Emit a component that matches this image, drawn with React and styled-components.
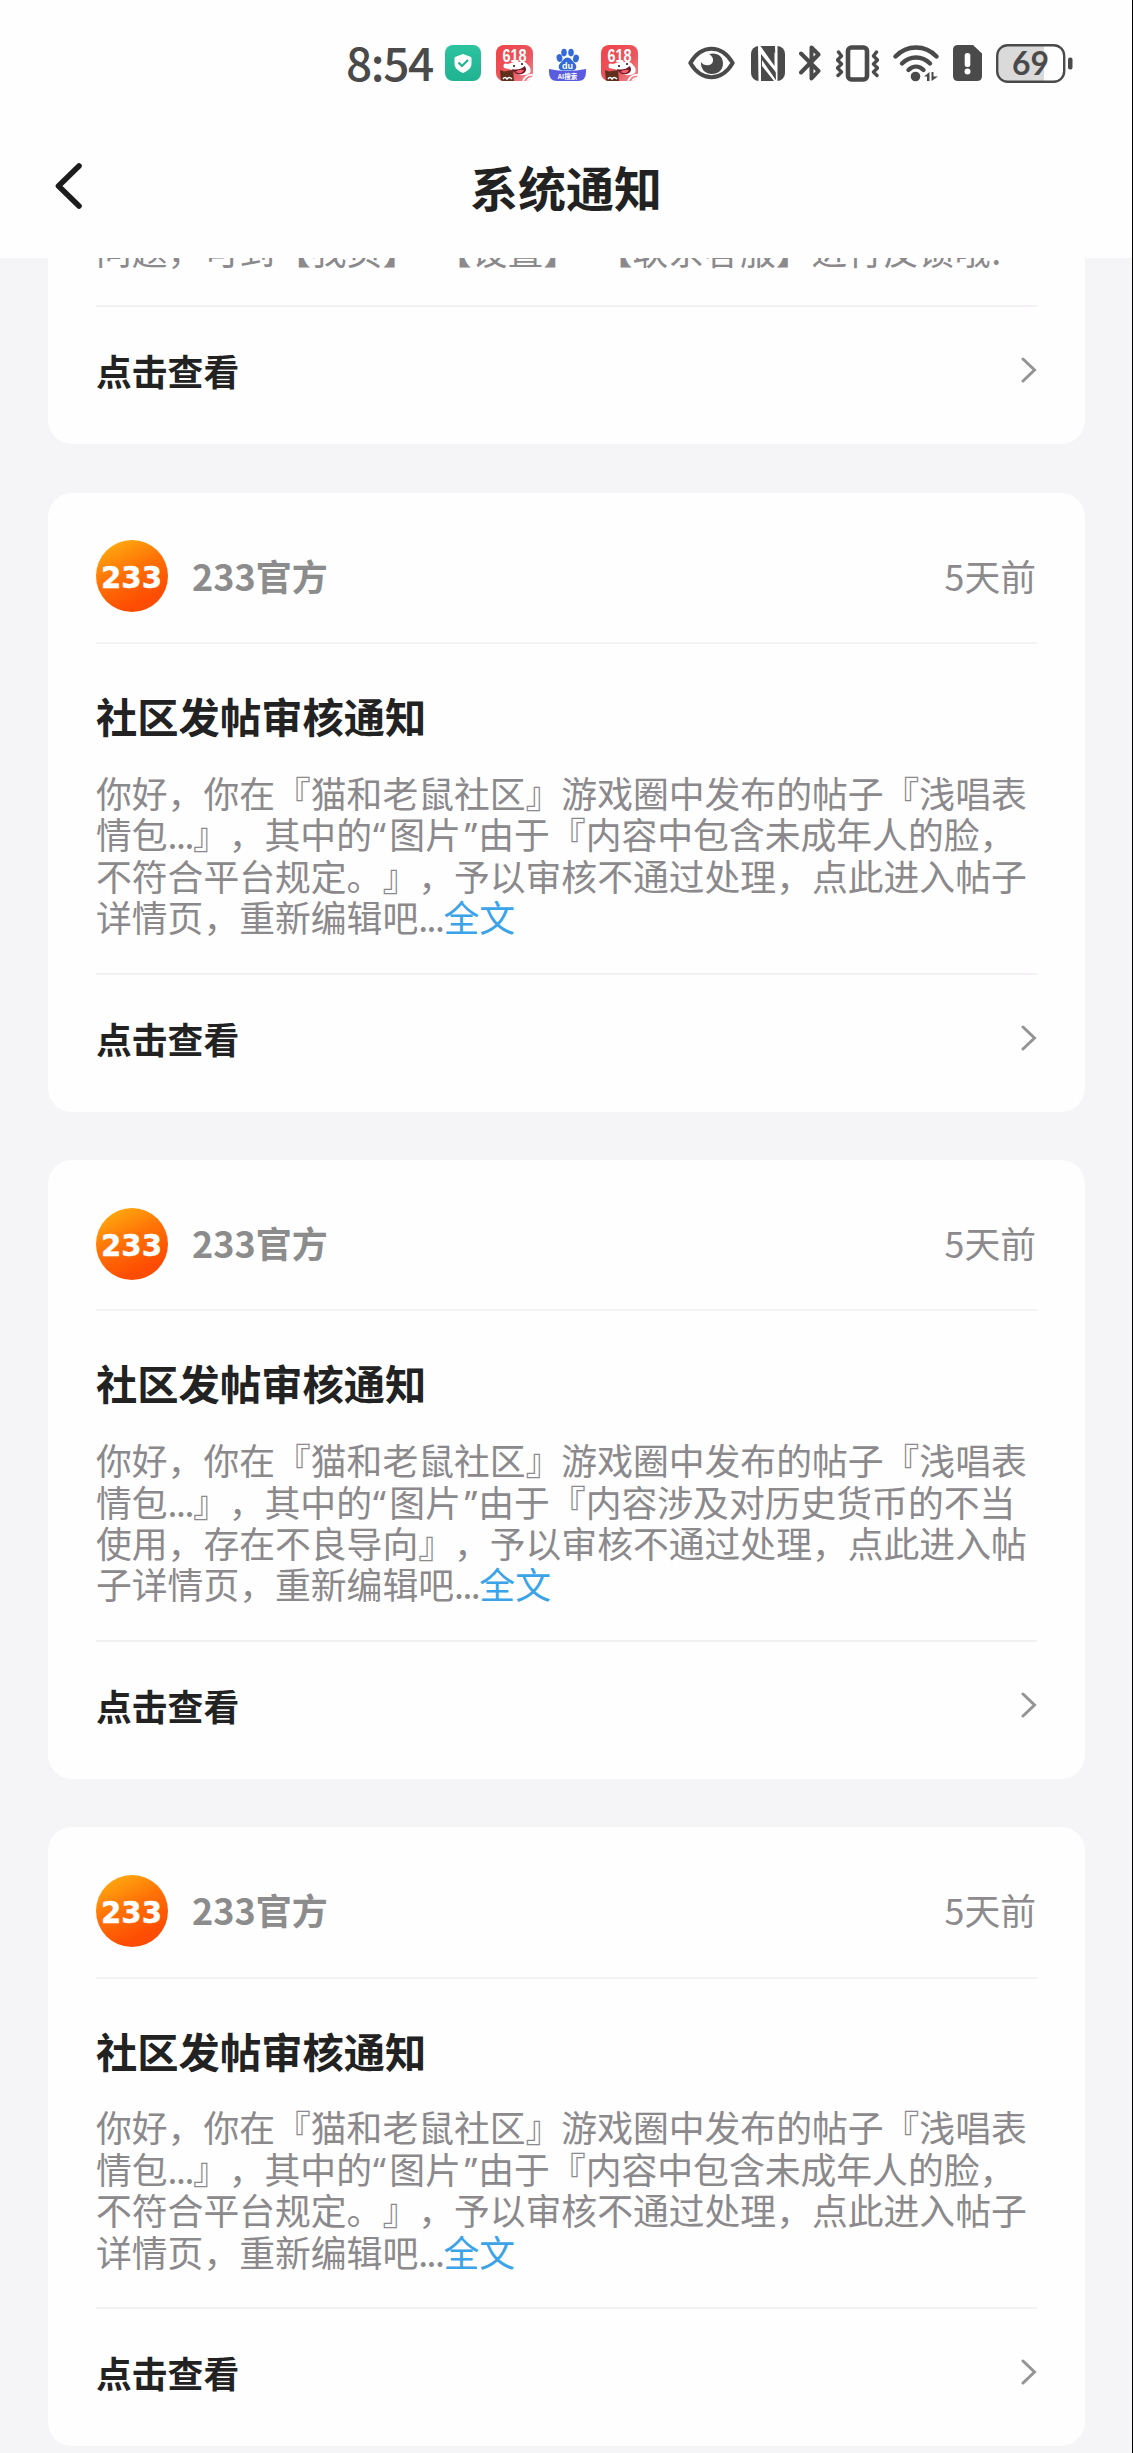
import React from "react";
import styled, { createGlobalStyle } from "styled-components";

const GlobalStyle = createGlobalStyle`
  * {
    box-sizing: border-box;
  }
  body {
    margin: 0;
    background: #f5f4f6;
    font-family: "Noto Sans CJK SC", sans-serif;
    text-spacing-trim: space-all;
    overflow: hidden;
  }
  h1, h2, p {
    margin: 0;
  }
`;

const Screen = styled.div`
  display: flex;
  flex-direction: column;
  width: 1133px;
  height: 2453px;
  overflow: hidden;
  background: #f5f4f6;
  border-right: 1px solid #000;
`;

const StatusBar = styled.div`
  flex: none;
  display: flex;
  height: 126px;
  padding: 0 59px 0 346px;
  align-items: center;
  justify-content: space-between;
  background: #fefefe;
  color: #4a4a4a;
`;

const StatusGroup = styled.div`
  display: flex;
  align-items: center;
  gap: ${({ $gap }) => $gap}px;

  svg {
    display: block;
    flex: none;
  }
`;

const Clock = styled.span`
  width: 83px;
  padding-bottom: 5px;
  font-size: 46px;
  font-weight: 500;
  line-height: 50px;
  letter-spacing: -1.4px;
  white-space: nowrap;
`;

const NavBar = styled.header`
  flex: none;
  display: grid;
  grid-template-columns: 96px 1fr 96px;
  align-items: center;
  height: 132px;
  padding-bottom: 12px;
  background: #fefefe;
`;

const BackButton = styled.button`
  display: flex;
  justify-content: flex-end;
  padding: 0 12.5px 0 0;
  border: 0;
  background: none;
`;

const NavTitle = styled.h1`
  padding-bottom: 1px;
  color: #222;
  font-size: 48px;
  font-weight: 700;
  line-height: 60px;
  text-align: center;
`;

const Feed = styled.main`
  flex: 1;
  min-height: 0;
  display: flex;
  flex-direction: column;
  justify-content: flex-end;
  gap: 48.2px;
  padding: 0 47px 7px 48px;
  overflow: hidden;
`;

const Card = styled.article`
  flex: none;
  display: flex;
  flex-direction: column;
  height: 619px;
  padding: 0 48px;
  border-radius: 24px;
  background: #fefefe;
`;

const Sender = styled.div`
  display: flex;
  align-items: center;
  height: 151.5px;
  padding-top: 18px;
  border-bottom: 2px solid #f3f2f4;

  svg {
    display: block;
    margin-right: 24px;
  }
`;

const SenderName = styled.span`
  flex: 1;
  padding-bottom: 3px;
  color: #8c8c8c;
  font-size: 36px;
  font-weight: 700;
`;

const Time = styled.time`
  padding: 0 1px 3px 0;
  color: #8c8a8d;
  font-size: 35.8px;
`;

const Content = styled.div`
  flex: 1;
  display: flex;
  flex-direction: column;
  padding-top: 41px;
`;

const Title = styled.h2`
  color: #222;
  font-size: 41.3px;
  font-weight: 700;
  line-height: 60px;
`;

const Message = styled.p`
  margin-top: auto;
  padding-bottom: 35px;
  color: #8b898c;
  font-size: 35.8px;
  line-height: 41.4px;
  white-space: nowrap;
`;

const Line = styled.span`
  display: block;
`;

const Dots = styled.span`
  letter-spacing: -1.5px;
`;

const Dash = styled.span`
  letter-spacing: -1.5px;
`;

const Quote = styled.span`
  display: inline-block;
  width: 17.4px;
  padding: 0 1px;
  font-family: "Noto Sans", sans-serif;
  line-height: 1;
  text-align: ${({ $side }) => $side};
`;

const FullTextLink = styled.a`
  color: #3ba3e8;
`;

const ViewRow = styled.div`
  flex: none;
  display: flex;
  align-items: center;
  justify-content: space-between;
  height: 139px;
  padding-bottom: 11px;
  border-top: 2px solid #f2f0f3;
  color: #222;
  font-size: 35.8px;
  font-weight: 700;
`;

function ShieldAppIcon() {
  return (
    <svg width="36" height="36" viewBox="0 0 36 36">
      <defs>
        <linearGradient id="shield" x1="0" y1="0" x2="0" y2="1">
          <stop offset="0" stopColor="#2cc39f" />
          <stop offset="1" stopColor="#20b391" />
        </linearGradient>
      </defs>
      <rect width="36" height="36" rx="8" fill="url(#shield)" />
      <path d="M18 9.500 26 12.500v6.500c0 4-3.400 6.500-8 8.500-4.600-2-8-4.500-8-8.500v-6.500z" fill="#fff" stroke="#fff" strokeLinejoin="round" />
      <path d="m13.500 17.500 3.500 3.500 6-6" fill="none" stroke="#22b592" strokeWidth="2.200" />
    </svg>
  );
}

function SaleAppIcon() {
  return (
    <svg width="37" height="36" viewBox="0 0 37 36">
      <defs>
        <linearGradient id="sale" x1="0" y1="0" x2="1" y2="1">
          <stop offset="0" stopColor="#ee4447" />
          <stop offset="0.6" stopColor="#ec5660" />
          <stop offset="1" stopColor="#f08a94" />
        </linearGradient>
        <clipPath id="saleClip">
          <rect width="37" height="36" rx="8" />
        </clipPath>
      </defs>
      <g clipPath="url(#saleClip)">
        <rect width="37" height="36" fill="url(#sale)" />
        <path d="M8 23q-2-6 4-4 5-2 7-2 1-3 4 0 6-2 9 3 4 3 2 8-2 2-6 2-8 1-11-5z" fill="#fff" />
        <path d="M16 24q7 2 13-3 3 6-3 8-7 2-10-5z" fill="#6b1823" />
        <path d="M19 27q4-3 9-2-2 5-9 2z" fill="#f4616b" />
        <circle cx="18" cy="21" r="1.100" fill="#2c2020" />
        <circle cx="26" cy="19" r="1.100" fill="#2c2020" />
        <path d="m4 25 4 1.500 9-1.500 1 11H5z" fill="#5d2f1c" />
        <path d="M7 34q2-3 4 0 2-3 5 0" fill="none" stroke="#fff" strokeWidth="1.500" />
        <path d="M27 36q3-7 10-6M31 36q2-3 6-3" fill="none" stroke="#fff" strokeWidth="1.800" />
        <text x="18.500" y="17" textAnchor="middle" fill="#fff" fontFamily="Liberation Sans, sans-serif" fontSize="18" fontWeight="700" textLength="24" lengthAdjust="spacingAndGlyphs">
          618
        </text>
      </g>
    </svg>
  );
}

function PawAppIcon() {
  return (
    <svg width="37" height="36" viewBox="0 0 37 36">
      <path d="M0 24q18 4 37 0v3q0 9-8 9H8q-8 0-8-9z" fill="#5a5ce0" />
      <g fill="#3569d8">
        <ellipse cx="10.500" cy="13" rx="2.900" ry="3.900" transform="rotate(-12 10.500 13)" />
        <ellipse cx="15" cy="7.600" rx="2.800" ry="3.800" />
        <ellipse cx="22" cy="7.600" rx="2.800" ry="3.800" />
        <ellipse cx="27" cy="13.500" rx="2.900" ry="3.900" transform="rotate(12 27 13.500)" />
        <path d="M18.500 12.500c3.500 0 4.500 3.500 7 5.500 3.500 3 1.500 7.500-2 7.500H13.500c-3.500 0-5.500-4.500-2-7.500 2.500-2 3.500-5.500 7-5.500z" />
      </g>
      <text x="18.500" y="23.500" textAnchor="middle" fill="#fff" fontFamily="Liberation Sans, sans-serif" fontSize="9" fontWeight="700">
        du
      </text>
      <text x="18.500" y="34" textAnchor="middle" fill="#fff" fontFamily="Noto Sans CJK SC, sans-serif" fontSize="6.500" fontWeight="700">
        AI搜索
      </text>
    </svg>
  );
}

function EyeIcon() {
  return (
    <svg width="49" height="34" viewBox="0 0 49 34">
      <path d="M2.300 17C8 7.500 15 2.800 23.500 2.800S39 7.500 44.700 17C39 26.500 32 31.200 23.500 31.200S8 26.500 2.300 17z" fill="none" stroke="#4a4a4a" strokeWidth="4" strokeLinejoin="round" />
      <path d="M21 8c8-2 14 2 14 9.500 0 6.500-5 10.500-11 10.500-7 0-11.500-5-11-12 2 4 11 5 12-1 .5-3-1.500-5.500-4-7z" fill="#4a4a4a" />
    </svg>
  );
}

function NfcIcon() {
  return (
    <svg width="34" height="35" viewBox="0 0 34 35">
      <rect width="34" height="35" rx="8" fill="#4a4a4a" />
      <path d="M7 0h2.500l14 20V6l2 3v18L10 8v27H7.500z" fill="#fefefe" />
      <path d="M11 14 25.500 35H23L11 20z" fill="#fefefe" />
      <path d="M24 0h2.500v35H25z" fill="#fefefe" />
    </svg>
  );
}

function BluetoothIcon() {
  return (
    <svg width="23" height="36" viewBox="0 0 23 36">
      <path d="M2 8.500 19.500 26 12.500 33.500V2.500L19.500 9.500 2 27.500" fill="none" stroke="#4a4a4a" strokeWidth="4" strokeLinecap="round" strokeLinejoin="round" />
    </svg>
  );
}

function VibrateIcon() {
  return (
    <svg width="43" height="37" viewBox="0.500 0 43 37">
      <rect x="12.500" y="2.500" width="19" height="32" rx="3.500" fill="none" stroke="#4a4a4a" strokeWidth="4.600" />
      <path d="m3 7 3 4-4 4 4 4-4 4 4 4-3.500 3.500M41 7l-3 4 4 4-4 4 4 4-4 4 3.500 3.500" fill="none" stroke="#4a4a4a" strokeWidth="3.400" strokeLinecap="round" strokeLinejoin="round" />
    </svg>
  );
}

function WifiIcon() {
  return (
    <svg width="46" height="37" viewBox="0 0 46 37">
      <g fill="none" stroke="#4a4a4a" strokeWidth="4.400" strokeLinecap="round">
        <path d="M2.500 11.500C14-.5 32-.5 43.500 11.500" />
        <path d="M9 18.500c8-8 20-8 28 0" />
        <path d="M15.500 25c4.500-4.500 10.500-4.500 15 0" />
      </g>
      <circle cx="22.500" cy="31.500" r="4.800" fill="#4a4a4a" />
      <path d="M36.500 27v9H34v-4.500h-3zM38.500 36v-9h2v4.500h4.500z" fill="#4a4a4a" />
    </svg>
  );
}

function SimAlertIcon() {
  return (
    <svg width="29" height="36" viewBox="0 0 29 36">
      <path d="M5 0h15l9 8.500V31q0 5-5 5H5q-5 0-5-5V5q0-5 5-5z" fill="#4a4a4a" />
      <rect x="11.700" y="8" width="5.600" height="14" rx="2.500" fill="#fefefe" />
      <circle cx="14.500" cy="26.500" r="3" fill="#fefefe" />
    </svg>
  );
}

function BatteryIcon() {
  return (
    <svg width="77" height="39" viewBox="0 0 77 39">
      <path d="M12 2h36v35H12Q2 37 2 27V12Q2 2 12 2z" fill="#dadada" />
      <rect x="1.200" y="1.200" width="67" height="36.600" rx="10.500" fill="none" stroke="#4a4a4a" strokeWidth="2.400" />
      <rect x="72" y="13.500" width="4.500" height="12" rx="2" fill="#4a4a4a" />
      <text x="34.500" y="30.500" textAnchor="middle" fill="#4a4a4a" fontFamily="Lato, sans-serif" fontSize="32" fontWeight="700">
        69
      </text>
    </svg>
  );
}

function BackIcon() {
  return (
    <svg width="30" height="50" viewBox="0 0 30 50">
      <path d="M25 5 4.500 25 25 45" fill="none" stroke="#1c1c1c" strokeWidth="5.600" strokeLinecap="round" strokeLinejoin="round" />
    </svg>
  );
}

function ChevronIcon() {
  return (
    <svg width="16" height="26" viewBox="0 0 16 26">
      <path d="m2 2 11.500 11L2 24" fill="none" stroke="#959395" strokeWidth="3" strokeLinecap="round" />
    </svg>
  );
}

function Avatar() {
  return (
    <svg width="72" height="72" viewBox="0 0 72 72">
      <defs>
        <linearGradient id="avatar" x1="0.150" y1="0.050" x2="0.550" y2="0.900">
          <stop offset="0" stopColor="#ffab10" />
          <stop offset="0.500" stopColor="#ff7206" />
          <stop offset="1" stopColor="#fd4c03" />
        </linearGradient>
      </defs>
      <circle cx="36" cy="36" r="36" fill="url(#avatar)" />
      <text x="35.500" y="47.500" textAnchor="middle" fill="#fff" stroke="#fff" strokeWidth="0.400" fontFamily="DejaVu Sans, sans-serif" fontSize="31" fontWeight="700" textLength="61" lengthAdjust="spacingAndGlyphs">
        233
      </text>
    </svg>
  );
}

const ellipsis = <Dots>...</Dots>;
const picture = (
  <>
    <Quote $side="left">“</Quote>图片<Quote $side="right">”</Quote>
  </>
);

const minorFace = [
  <>你好，你在『猫和老鼠社区』游戏圈中发布的帖子『浅唱表</>,
  <>情包{ellipsis}』，其中的{picture}由于『内容中包含未成年人的脸，</>,
  <>不符合平台规定。』，予以审核不通过处理，点此进入帖子</>,
  <>详情页，重新编辑吧{ellipsis}<FullTextLink>全文</FullTextLink></>,
];

const currency = [
  <>你好，你在『猫和老鼠社区』游戏圈中发布的帖子『浅唱表</>,
  <>情包{ellipsis}』，其中的{picture}由于『内容涉及对历史货币的不当</>,
  <>使用，存在不良导向』，予以审核不通过处理，点此进入帖</>,
  <>子详情页，重新编辑吧{ellipsis}<FullTextLink>全文</FullTextLink></>,
];

const feedback = [
  <>
    问题，可到【我页】<Dash>–</Dash>【设置】<Dash>–</Dash>【联系客服】进行反馈哦!
  </>,
];

const notices = [
  { id: 1, lines: feedback },
  { id: 2, lines: minorFace },
  { id: 3, lines: currency },
  { id: 4, lines: minorFace },
];

function NoticeCard({ lines }) {
  return (
    <Card>
      <Sender>
        <Avatar />
        <SenderName>233官方</SenderName>
        <Time>5天前</Time>
      </Sender>
      <Content>
        <Title>社区发帖审核通知</Title>
        <Message>
          {lines.map((line, index) => (
            <Line key={index}>{line}</Line>
          ))}
        </Message>
      </Content>
      <ViewRow>
        点击查看
        <ChevronIcon />
      </ViewRow>
    </Card>
  );
}

export default function App() {
  return (
    <Screen>
      <GlobalStyle />
      <StatusBar>
        <StatusGroup $gap={15.5}>
          <Clock>8:54</Clock>
          <ShieldAppIcon />
          <SaleAppIcon />
          <PawAppIcon />
          <SaleAppIcon />
        </StatusGroup>
        <StatusGroup $gap={14}>
          <EyeIcon />
          <NfcIcon />
          <BluetoothIcon />
          <VibrateIcon />
          <WifiIcon />
          <SimAlertIcon />
          <BatteryIcon />
        </StatusGroup>
      </StatusBar>
      <NavBar>
        <BackButton aria-label="返回">
          <BackIcon />
        </BackButton>
        <NavTitle>系统通知</NavTitle>
      </NavBar>
      <Feed>
        {notices.map((notice) => (
          <NoticeCard key={notice.id} lines={notice.lines} />
        ))}
      </Feed>
    </Screen>
  );
}
